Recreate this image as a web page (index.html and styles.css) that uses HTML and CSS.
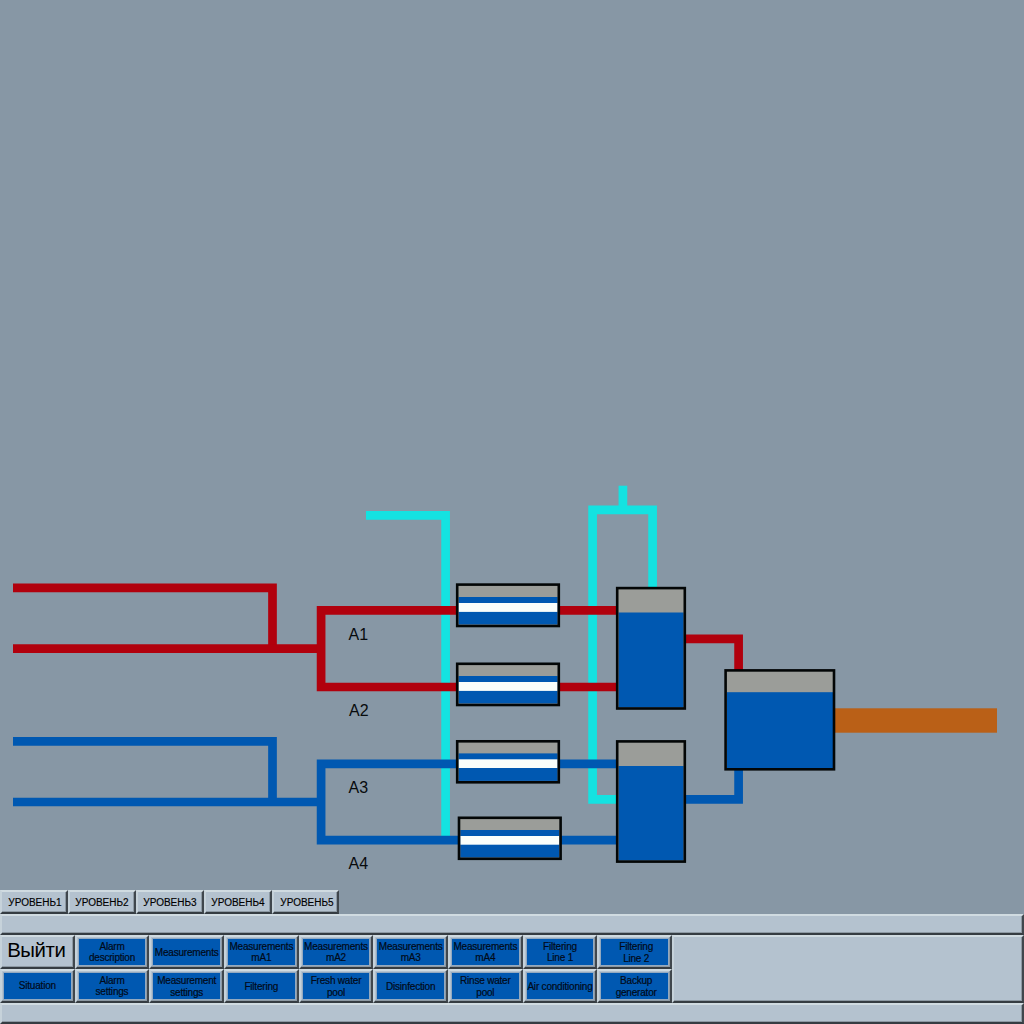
FILE: index.html
```html
<!DOCTYPE html>
<html lang="ru">
<head>
<meta charset="utf-8">
<title>Process overview</title>
<link rel="stylesheet" href="styles.css">
</head>
<body>
<main class="screen">
  <svg class="diagram" viewBox="0 0 1024 890" width="1024" height="890" role="img" aria-label="Process diagram">
    <g class="pipe cyan">
      <path d="M366 515.4H445.6V836"/>
      <path d="M617 799.3H592.6V509.9H652.6V587"/>
      <path d="M622.9 485.7V510"/>
    </g>
    <g class="pipe red">
      <path d="M13 587.8H272.5V648.7"/>
      <path d="M13 648.7H321"/>
      <path d="M617 610.4H321.1V687H617"/>
      <path d="M685 638.8H738.6V670"/>
    </g>
    <g class="pipe blue">
      <path d="M13 741.3H272.5V802"/>
      <path d="M13 802H321"/>
      <path d="M617 763.8H321.1V840.2H617"/>
      <path d="M685 799.3H738.6V770"/>
    </g>
    <rect class="outlet" x="834" y="708.3" width="163" height="24.4"/>
    <g class="filter">
      <rect class="air" x="457.2" y="584.6" width="101.6" height="41.4"/>
      <rect class="water" x="458.6" y="597" width="99" height="27.5"/>
      <rect class="flow" x="458.6" y="603" width="99" height="8.9"/>
      <rect class="frame" x="457.2" y="584.6" width="101.6" height="41.4"/>
    </g>
    <g class="filter">
      <rect class="air" x="457.2" y="663.8" width="101.6" height="41.2"/>
      <rect class="water" x="458.6" y="676" width="99" height="27.5"/>
      <rect class="flow" x="458.6" y="682" width="99" height="8.9"/>
      <rect class="frame" x="457.2" y="663.8" width="101.6" height="41.2"/>
    </g>
    <g class="filter">
      <rect class="air" x="457.2" y="741.3" width="101.6" height="41"/>
      <rect class="water" x="458.6" y="753.4" width="99" height="27.5"/>
      <rect class="flow" x="458.6" y="759.3" width="99" height="8.7"/>
      <rect class="frame" x="457.2" y="741.3" width="101.6" height="41"/>
    </g>
    <g class="filter">
      <rect class="air" x="459" y="817.8" width="101.6" height="41"/>
      <rect class="water" x="460.3" y="830" width="99" height="27.5"/>
      <rect class="flow" x="460.3" y="836" width="99" height="8.7"/>
      <rect class="frame" x="459" y="817.8" width="101.6" height="41"/>
    </g>
    <g class="tank">
      <rect class="air" x="617.2" y="588.1" width="67.6" height="120.4"/>
      <rect class="water" x="618.6" y="612.5" width="65" height="95"/>
      <rect class="frame" x="617.2" y="588.1" width="67.6" height="120.4"/>
    </g>
    <g class="tank">
      <rect class="air" x="617.2" y="741.4" width="67.6" height="120.2"/>
      <rect class="water" x="618.6" y="766" width="65" height="94.5"/>
      <rect class="frame" x="617.2" y="741.4" width="67.6" height="120.2"/>
    </g>
    <g class="tank">
      <rect class="air" x="725.6" y="670.4" width="108.4" height="98.9"/>
      <rect class="water" x="727" y="692.2" width="106" height="76"/>
      <rect class="frame" x="725.6" y="670.4" width="108.4" height="98.9"/>
    </g>
    <g class="label">
      <text x="348.6" y="640.4">A1</text>
      <text x="349" y="715.6">A2</text>
      <text x="348.6" y="793.4">A3</text>
      <text x="348.6" y="869">A4</text>
    </g>
  </svg>

  <nav class="levels">
    <button class="key level first">УРОВЕНЬ1</button>
    <button class="key level">УРОВЕНЬ2</button>
    <button class="key level">УРОВЕНЬ3</button>
    <button class="key level">УРОВЕНЬ4</button>
    <button class="key level last">УРОВЕНЬ5</button>
  </nav>
  <div class="key band"></div>
  <section class="controls">
    <div class="grid">
      <button class="key exit">Выйти</button>
      <button class="key"><span class="face">Alarm<br>description</span></button>
      <button class="key"><span class="face down">Measurements</span></button>
      <button class="key"><span class="face">Measurements<br>mA1</span></button>
      <button class="key"><span class="face">Measurements<br>mA2</span></button>
      <button class="key"><span class="face">Measurements<br>mA3</span></button>
      <button class="key"><span class="face">Measurements<br>mA4</span></button>
      <button class="key"><span class="face">Filtering<br>Line 1</span></button>
      <button class="key"><span class="face down right">Filtering<br>Line 2</span></button>
      <button class="key"><span class="face">Situation</span></button>
      <button class="key"><span class="face">Alarm<br>settings</span></button>
      <button class="key"><span class="face down">Measurement<br>settings</span></button>
      <button class="key"><span class="face down">Filtering</span></button>
      <button class="key"><span class="face down">Fresh water<br>pool</span></button>
      <button class="key"><span class="face down">Disinfection</span></button>
      <button class="key"><span class="face down">Rinse water<br>pool</span></button>
      <button class="key"><span class="face down">Air conditioning</span></button>
      <button class="key"><span class="face down right">Backup<br>generator</span></button>
    </div>
    <div class="key panel"></div>
  </section>
  <div class="key band"></div>
</main>
</body>
</html>
```
FILE: styles.css
```css
* { box-sizing: border-box; }

body {
  margin: 0;
  background: #8797a5;
  color: #000;
  font-family: "Liberation Sans", Arial, sans-serif;
}

.screen {
  width: 1024px;
  height: 1024px;
  display: flex;
  flex-direction: column;
  overflow: hidden;
}

.diagram { display: block; flex: none; }

.pipe { fill: none; stroke-width: 8.7; }
.cyan { stroke: #14e2e1; }
.red { stroke: #b1000d; }
.blue { stroke: #0058b1; }
.outlet { fill: #ba6017; }
.air { fill: #9b9d99; }
.water { fill: #0058b1; }
.flow { fill: #f9fefb; }
.frame { fill: none; stroke: #030606; stroke-width: 2.6; }
.label { font-size: 16px; fill: #080b0d; }

/* Raised key with a light top-left and dark bottom-right edge */
.key {
  margin: 0;
  padding: 0;
  border: 2px solid;
  border-color: #d0dbe1 #40474d #353c42 #c6d2da;
  border-radius: 0;
  background: #b4c2cf;
  box-shadow: inset -1px -1px 0 #8d99a3;
  color: #000;
  font-family: inherit;
}

.levels { display: flex; height: 24px; flex: none; }
.level { width: 68px; font-size: 10px; line-height: 20px; padding: 1px 0 0; white-space: nowrap; -webkit-text-stroke: 0.15px #000; }
.level.first { padding-left: 2px; }
.level.last { width: 67px; padding-left: 3px; }

.band { height: 21px; flex: none; }

.controls { display: flex; height: 68px; flex: none; }
.grid {
  width: 672px;
  display: grid;
  grid-template-columns: repeat(9, 1fr);
  grid-template-rows: 34px 34px;
}
.grid .key { display: flex; padding: 1px; min-width: 0; }
.grid .exit {
  justify-content: center;
  padding: 2px 2px 0 0;
  font-size: 20.4px;
  line-height: 23px;
  letter-spacing: -0.4px;
  white-space: nowrap;
}
.face {
  flex: 1;
  min-width: 0;
  align-self: stretch;
  display: flex;
  flex-direction: column;
  justify-content: center;
  border: 1px solid #93a9c0;
  background: #0058b1;
  color: #000a18;
  font-size: 10px;
  letter-spacing: -0.2px;
  line-height: 11.4px;
  text-align: center;
  white-space: nowrap;
  -webkit-text-stroke: 0.2px #000a18;
}
.down { padding-top: 1px; }
.right { padding-left: 3px; }
.panel { flex: 1; }
```
